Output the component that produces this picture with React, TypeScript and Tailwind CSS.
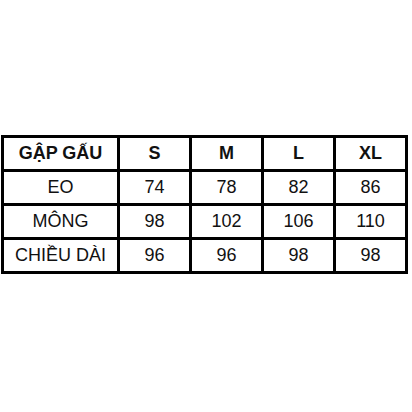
const header = ["GẬP GẤU", "S", "M", "L", "XL"];

const rows = [
  ["EO", "74", "78", "82", "86"],
  ["MÔNG", "98", "102", "106", "110"],
  ["CHIỀU DÀI", "96", "96", "98", "98"],
];

export default function App() {
  return (
    <div
      className="h-[412px] w-[412px] bg-white pt-[135px] pl-[1px]"
      style={{ fontFamily: '"Liberation Sans", Arial, sans-serif' }}
    >
      <div className="inline-grid grid-cols-[113px_repeat(4,69px)] auto-rows-[31px] gap-[3px] bg-black p-[3px]">
        {header.map((h) => (
          <div
            key={h}
            className="flex items-center justify-center bg-white text-[18px] font-bold text-[#111]"
          >
            {h}
          </div>
        ))}
        {rows.map((row) =>
          row.map((cell, i) => (
            <div
              key={row[0] + i}
              className="flex items-center justify-center bg-white text-[18px] text-[#111]"
            >
              {cell}
            </div>
          ))
        )}
      </div>
    </div>
  );
}
